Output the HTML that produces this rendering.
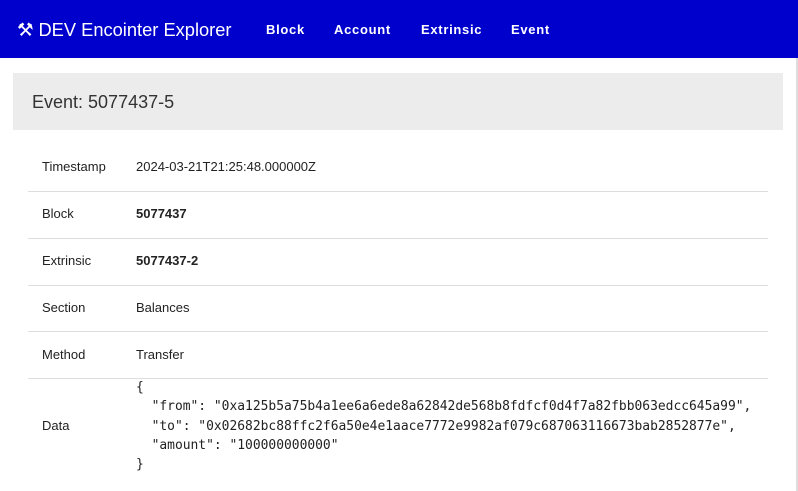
<!DOCTYPE html>
<html><head><style>
body{margin:0;width:798px;height:491px;overflow:hidden;background:#fff;font-family:"Liberation Sans",sans-serif;color:#222;position:relative}
.nav{height:58px;background:#0000cc;color:#fff;position:relative}
.brand{position:absolute;left:17px;top:19px;font-size:18.3px}
.nav a{position:absolute;top:22px;font-size:13px;font-weight:bold;letter-spacing:0.7px;color:#fff}
.hdr{position:absolute;left:13px;top:73px;width:770px;height:57px;background:#ececec}
.hdr span{position:absolute;left:19px;top:19px;font-size:18px;color:#333}
.row{position:absolute;left:28px;width:740px;border-bottom:1px solid #ddd;font-size:13px}
.row .k{position:absolute;left:14px}
.row .v{position:absolute;left:108px}
pre{margin:0;font-family:"DejaVu Sans Mono",monospace;font-size:12.95px;line-height:19.3px;color:#222}
.edge{position:absolute;right:0;top:58px;width:2px;height:433px;background:#ddd}
</style></head><body>
<div class="nav"><span class="brand">⚒ DEV Encointer Explorer</span>
<a style="left:266px">Block</a><a style="left:334px">Account</a><a style="left:421px">Extrinsic</a><a style="left:511px">Event</a></div>
<div class="edge"></div>
<div class="hdr"><span>Event: 5077437-5</span></div>
<div class="row" style="top:144px;height:47px"><span class="k" style="top:15px">Timestamp</span><span class="v" style="top:15px">2024-03-21T21:25:48.000000Z</span></div>
<div class="row" style="top:192px;height:46px"><span class="k" style="top:14px">Block</span><b class="v" style="top:14px">5077437</b></div>
<div class="row" style="top:239px;height:46px"><span class="k" style="top:14px">Extrinsic</span><b class="v" style="top:14px">5077437-2</b></div>
<div class="row" style="top:286px;height:45px"><span class="k" style="top:14px">Section</span><span class="v" style="top:14px">Balances</span></div>
<div class="row" style="top:332px;height:46px"><span class="k" style="top:15px">Method</span><span class="v" style="top:15px">Transfer</span></div>
<div class="row" style="top:379px;height:96px;border-bottom:none"><span class="k" style="top:39px">Data</span>
<pre class="v" style="top:-1px">{
  "from": "0xa125b5a75b4a1ee6a6ede8a62842de568b8fdfcf0d4f7a82fbb063edcc645a99",
  "to": "0x02682bc88ffc2f6a50e4e1aace7772e9982af079c687063116673bab2852877e",
  "amount": "100000000000"
}</pre></div>
</body></html>
